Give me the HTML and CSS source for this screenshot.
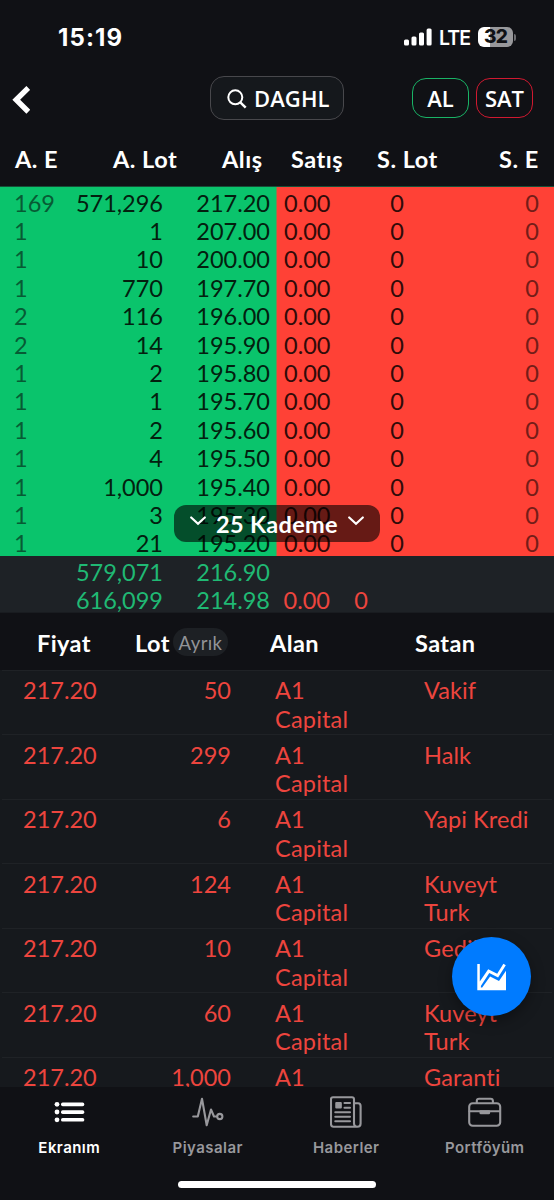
FILE: index.html
```html
<!DOCTYPE html>
<html lang="tr">
<head>
<meta charset="utf-8">
<title>DAGHL</title>
<link rel="stylesheet" href="styles.css">
</head>
<body>
<div class="app">
  <header class="status">
    <span class="clock">15:19</span>
    <div class="status-right">
      <svg class="signal" viewBox="0 0 28 18" width="28" height="18" fill="#fff"><rect x="0" y="11.5" width="5" height="6" rx="1.5"/><rect x="7.5" y="8.5" width="5" height="9" rx="1.5"/><rect x="15" y="4.5" width="5" height="13" rx="1.5"/><rect x="22.6" y="0.5" width="5" height="17" rx="1.5"/></svg>
      <span class="network">LTE</span>
      <span class="battery">32</span>
      <span class="battery-tip"></span>
    </div>
  </header>
  <nav class="topbar">
    <svg class="back" viewBox="0 0 18 28" width="18" height="28"><path d="M16.3 1.9 4.2 13.8 16.3 25.7" fill="none" stroke="#fff" stroke-width="5.4"/></svg>
    <div class="search">
      <svg viewBox="0 0 20 20" width="20" height="20" fill="none" stroke="#fff" stroke-width="2"><circle cx="8.3" cy="8.3" r="7"/><path d="m13.3 13.3 5.4 5.4" stroke-width="2.4"/></svg>
      <span>DAGHL</span>
    </div>
    <button class="order buy">AL</button>
    <button class="order sell">SAT</button>
  </nav>
  <div class="book-head">
    <span>A. E</span><span>A. Lot</span><span>Alış</span><span>Satış</span><span>S. Lot</span><span>S. E</span>
  </div>
  <section class="book">
    <div class="bids" id="bids"></div>
    <div class="asks" id="asks"></div>
    <div class="depth">
      <svg viewBox="0 0 16 10" width="16" height="10"><path d="m1.2 1.5 6.8 6.3 6.8-6.3"/></svg>
      <span>25 Kademe</span>
      <svg viewBox="0 0 16 10" width="16" height="10"><path d="m1.2 1.5 6.8 6.3 6.8-6.3"/></svg>
    </div>
  </section>
  <section class="totals">
    <div class="total"><span></span><span>579,071</span><span>216.90</span></div>
    <div class="total"><span></span><span>616,099</span><span>214.98</span><span class="neg">0.00</span><span class="neg">0</span></div>
  </section>
  <div class="trade-head"><span>Fiyat</span><span>Lot</span><span class="chip">Ayrık</span><span>Alan</span><span>Satan</span></div>
  <section class="trades" id="trades"></section>
  <button class="fab">
    <svg viewBox="0 0 30 28" width="30" height="28"><path d="M.3 1h2.5v17.5L11.2 6.2l9 4.6L26.4.8l2.4 1.4-7.7 12.3-8.8-4.6L4 22.8 3.8 24.6h1.4l7.9-11.2 8.9 4.6 7-10.3v19.5H.3z" fill="#fff"/></svg>
  </button>
  <footer class="tabbar">
    <div class="tabs">
      <a class="tab active">
        <svg viewBox="0 0 32 32" width="32" height="32" fill="#fff"><circle cx="4" cy="8.3" r="2.4"/><circle cx="4" cy="16" r="2.4"/><circle cx="4" cy="23.8" r="2.4"/><rect x="8" y="6.6" width="23.3" height="3.6" rx="1.7"/><rect x="8" y="14.3" width="23.3" height="3.6" rx="1.7"/><rect x="8" y="22" width="23.3" height="3.6" rx="1.7"/></svg>
        <span>Ekranım</span>
      </a>
      <a class="tab">
        <svg class="line" viewBox="0 0 32 32" width="32" height="32"><path d="M1.2 20.5h4.6L10 2.8l4.7 26.5 4.3-15.8 3 7h3"/><circle cx="27.8" cy="20.5" r="2.6"/></svg>
        <span>Piyasalar</span>
      </a>
      <a class="tab">
        <svg class="line" viewBox="0 0 32 32" width="32" height="32"><path d="M24 28V3.3Q24 1.3 22 1.3H3q-2 0-2 2V28q0 2.8 2.5 2.8h23.8q3.3 0 3.3-3.3V10q0-2.8-2.5-2.8H24M24 27q0 3.8 3.3 3.8"/><path d="M14.5 7h5.5M14.5 11.7h5.5M5.3 16.2H20M5.3 20.7H20M5.3 25.2H20"/><rect x="6.3" y="7" width="4.5" height="4.5" fill="#98989c"/></svg>
        <span>Haberler</span>
      </a>
      <a class="tab">
        <svg class="line" viewBox="0 0 34 32" width="34" height="32"><rect x="1.2" y="7.2" width="31" height="22.5" rx="3.5"/><path d="M8.8 7V5q0-2.3 2.3-2.3h11.5q2.3 0 2.3 2.3v2M1.5 15.2h30.5"/><path d="M12.5 15.3h8.6v1.8h-8.6z"/></svg>
        <span>Portföyüm</span>
      </a>
    </div>
    <div class="home"></div>
  </footer>
</div>
<script src="app.js"></script>
</body>
</html>
```
FILE: styles.css
```css
* { box-sizing: border-box; }
body { margin: 0; background: #101115; }
.app {
  position: relative;
  width: 554px;
  height: 1200px;
  overflow: hidden;
  display: flex;
  flex-direction: column;
  background: #101115;
  color: #fff;
  font: 400 23.5px/28.4px Lato, sans-serif;
  font-variant-ligatures: none;
  white-space: nowrap;
}
.app > * { flex-shrink: 0; }
button { font: inherit; color: inherit; background: none; padding: 0; }

.status { height: 74px; display: flex; justify-content: space-between; padding: 0 38px 0 58px; align-items: center; }
.clock { font: 700 24px/28px Inter, sans-serif; letter-spacing: 1.1px; padding-top: 1px; }
.status-right { display: flex; align-items: center; }
.network { font: 600 19.5px/24px Inter, sans-serif; letter-spacing: -1px; margin: 0 8px 0 7px; padding-top: 1px; }
.battery { width: 35px; height: 20px; border-radius: 6px; background: linear-gradient(90deg, #fff 0 12px, #98989b 12px); color: #101115; text-align: center; font: 800 19px/20px Inter, sans-serif; letter-spacing: -.7px; }
.battery-tip { width: 2px; height: 7px; margin-left: 1px; border-radius: 0 3px 3px 0; background: #6c6c70; }

.topbar { height: 62px; display: flex; align-items: flex-start; padding-left: 12px; }
.back { margin-top: 12px; }
.search { margin: 2px 0 0 180px; width: 134px; height: 44px; border: 1px solid #48484c; border-radius: 14px; background: #15181c; display: flex; align-items: center; padding-left: 16px; gap: 7px; font: 600 22px/44px "Open Sans", sans-serif; letter-spacing: .1px; }
.search svg { margin-top: 2px; }
.order { width: 57px; height: 40px; margin-top: 4px; border-radius: 14px; border: 1.5px solid #19b366; font: 600 22px/37px "Open Sans", sans-serif; }
.buy { margin-left: 68px; }
.sell { margin-left: 7px; border-color: #d01930; }

.book-head { height: 50px; padding: 9px 0 0 15px; display: grid; grid-template-columns: 98px 109px 69px 86px 122px 1fr; font-weight: 700; line-height: 28px; letter-spacing: .5px; }

.book { position: relative; height: 370px; display: flex; overflow: hidden; color: #03200f; border-top: 1px solid #174f38; }
.bids { width: 277px; background: #0ac46c; border-right: 1px solid #7f8750; }
.asks { width: 277px; background: #ff4136; color: #300b09; }
.bid { display: grid; grid-template-columns: 45px 104px 107px; padding: 1.5px 0 0 14px; height: 28.42px; }
.ask { display: grid; grid-template-columns: 47px 73px 135px; padding: 1.5px 0 0 7px; height: 28.42px; }
.bid span + span, .ask span + span { text-align: right; }
.bid span:first-child { color: #075b34; }
.ask span:last-child { color: #731d18; }
.depth { position: absolute; left: 174px; top: 318px; width: 206px; height: 37px; border-radius: 12px; background: rgba(0, 0, 0, .6); color: #fff; display: flex; align-items: center; justify-content: center; gap: 10px; font-weight: 700; letter-spacing: .3px; padding-top: 1px; }
.depth svg { fill: none; stroke: #fff; stroke-width: 2.2; stroke-linecap: round; margin-bottom: 6px; }

.totals { height: 57px; background: #1e2226; color: #20b974; border-bottom: 1px solid #191c20; }
.total { height: 28.4px; padding: 2px 0 0 14px; display: grid; grid-template-columns: 45px 104px 107px 60px 38px; }
.total span { text-align: right; }
.total .neg { color: #ed453e; }

.trade-head { height: 57px; display: grid; grid-template-columns: 98px 38px 97px 145px 1fr; padding: 16px 0 0 37px; font-weight: 700; letter-spacing: .4px; }
.trade-head .chip { width: 55px; height: 28px; border-radius: 14px; background: #1d2024; color: #929397; font-weight: 400; font-size: 18.5px; line-height: 30px; text-align: center; margin-top: -1px; }
.trades { height: 417px; overflow: hidden; background: #16191d; color: #ed453e; padding: 0 2px; }
.trade { height: 64.45px; border-top: 1px solid #1f2226; padding: 5.4px 0 0 21px; display: grid; grid-template-columns: 78px 130px 44px 105px 44px 128px; align-items: start; }
.trade .lot { text-align: right; }
.trade .buyer { grid-column: 4; letter-spacing: .2px; }
.trade .seller { grid-column: 6; letter-spacing: .1px; }

.fab { position: absolute; left: 452px; top: 937px; width: 79px; height: 79px; border: 0; border-radius: 50%; background: #007bff; display: flex; align-items: center; justify-content: center; box-shadow: 0 5px 14px rgba(0, 0, 0, .35); }

.tabbar { height: 113px; background: #101115; display: flex; flex-direction: column; align-items: center; }
.tabs { display: grid; grid-template-columns: repeat(4, 1fr); width: 554px; height: 92px; padding-top: 9px; }
.tab { display: flex; flex-direction: column; align-items: center; gap: 9px; color: #98989c; font: 600 15px/22px Inter, sans-serif; letter-spacing: .45px; }
.tab.active { color: #fff; }
.line { fill: none; stroke: #98989c; stroke-width: 2.1; stroke-linejoin: round; stroke-linecap: round; }
.home { width: 198px; height: 7px; border-radius: 4px; background: #fff; margin-top: 2px; }
```
FILE: app.js
```js
const bids = [
  ["169", "571,296", "217.20"], ["1", "1", "207.00"], ["1", "10", "200.00"],
  ["1", "770", "197.70"], ["2", "116", "196.00"], ["2", "14", "195.90"],
  ["1", "2", "195.80"], ["1", "1", "195.70"], ["1", "2", "195.60"],
  ["1", "4", "195.50"], ["1", "1,000", "195.40"], ["1", "3", "195.30"],
  ["1", "21", "195.20"]
];
const trades = [
  ["50", "Vakif"], ["299", "Halk"], ["6", "Yapi Kredi"], ["124", "Kuveyt<br>Turk"],
  ["10", "Gedik"], ["60", "Kuveyt<br>Turk"], ["1,000", "Garanti"]
];
const cells = (row) => row.map((v) => `<span>${v}</span>`).join("");
document.getElementById("bids").innerHTML =
  bids.map((r) => `<div class="bid">${cells(r)}</div>`).join("");
document.getElementById("asks").innerHTML =
  bids.map(() => `<div class="ask">${cells(["0.00", "0", "0"])}</div>`).join("");
document.getElementById("trades").innerHTML = trades.map(([lot, seller]) =>
  `<div class="trade"><span>217.20</span><span class="lot">${lot}</span><span class="buyer">A1<br>Capital</span><span class="seller">${seller}</span></div>`).join("");
```
